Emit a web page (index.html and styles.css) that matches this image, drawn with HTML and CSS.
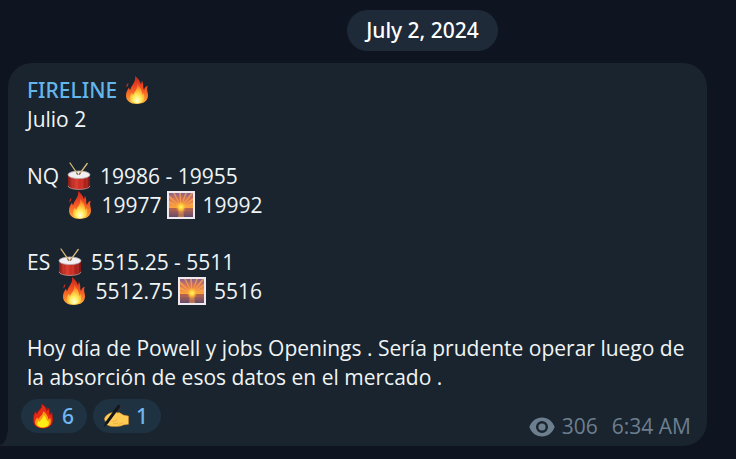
FILE: index.html
```html
<!DOCTYPE html>
<html lang="es">
<head>
<meta charset="utf-8">
<meta name="viewport" content="width=device-width, initial-scale=1">
<title>FIRELINE</title>
<link rel="stylesheet" href="styles.css">
</head>
<body>
<svg class="defs" aria-hidden="true">
  <defs>
    <linearGradient id="flame" x1="0" y1="0" x2="0" y2="1">
      <stop offset="0" stop-color="#c8241d"/><stop offset=".4" stop-color="#ef4a22"/><stop offset=".8" stop-color="#fb8a2c"/><stop offset="1" stop-color="#ffc34a"/>
    </linearGradient>
    <radialGradient id="core" cx=".5" cy=".85" r=".75">
      <stop offset="0" stop-color="#fffde0"/><stop offset=".35" stop-color="#ffee5c"/><stop offset=".75" stop-color="#ffa62e"/><stop offset="1" stop-color="#f96a25"/>
    </radialGradient>
    <linearGradient id="drumBody" x1="0" y1="0" x2="1" y2="0">
      <stop offset="0" stop-color="#8e1a18"/><stop offset=".35" stop-color="#d93a2c"/><stop offset=".65" stop-color="#c52a22"/><stop offset="1" stop-color="#7d1515"/>
    </linearGradient>
    <linearGradient id="sky" x1="0" y1="0" x2="0" y2="1">
      <stop offset="0" stop-color="#85618f"/><stop offset=".4" stop-color="#d97555"/><stop offset="1" stop-color="#ffa53a"/>
    </linearGradient>
    <linearGradient id="sea" x1="0" y1="0" x2="0" y2="1">
      <stop offset="0" stop-color="#c56b49"/><stop offset="1" stop-color="#5f4b72"/>
    </linearGradient>
    <radialGradient id="sun"><stop offset="0" stop-color="#fff873"/><stop offset=".4" stop-color="#ffd03a"/><stop offset="1" stop-color="#ff9d33" stop-opacity="0"/></radialGradient>
  </defs>
  <symbol id="fire" viewBox="0 0 28 28">
    <path fill="url(#flame)" d="M12 0c.6 3.500-.4 5.800-2.200 8.500C8.500 10.400 7.500 12 7.200 14.200c-.7-.6-1.100-1.500-1.200-2.700C4.300 14 3 16.500 3 19.500 3 25 7.500 28 13.800 28 20.500 28 25 24.800 25 19.300c0-2.200-.8-4-.9-6-.1-1.400.2-2.500.7-3.600-2.200.6-3.400 2-3.700 4.300-1-1.200-.8-3-.9-5.200-.1-1.700-.6-3-1.500-4.200.1 1.500-.1 2.700-.8 3.600C17 5 15 2 12 0z"/>
    <path fill="#d52b1f" d="M5.300 7C3.400 8.300 3 10 3.900 11.600 4.500 10.300 5.500 9 5.300 7z"/>
    <path fill="url(#core)" d="M14 8c.6 3.500-.6 6-2.800 8.700-.6.8-.9 1.500-1 2.300-.8-.5-1.100-1.300-1.100-2.200C7.500 18.500 6.700 20 6.800 22c.2 3.500 3.200 5.300 7.200 5.300 4.500 0 7.500-2.200 7.500-6 0-1.600-.5-2.900-.5-4.300-.9.5-1.400 1.200-1.600 2-.5-4.500-2-8.500-5.400-11z"/>
  </symbol>
  <symbol id="fire-bold" viewBox="0 0 24 28">
    <path fill="#e52a16" stroke="#a91310" d="M10.500 1c.7 4-1.500 5.600-3.800 8.200-.7.800-1 1.500-1.100 2.500-1-.6-1.300-1.600-1.200-2.700C2 11.800 1.500 15 1.600 18.500 1.900 24 5.700 27 11.800 27 18.500 27 22.300 23.500 22.500 18c.1-3-.9-5.200-1.200-8-1 .8-1.300 1.800-1.500 3-.8-1.300-.5-3-.8-4.700-.3-1.600-1-2.600-2.200-3.300.1 1.400 0 2.300-.6 3.100C15.500 5 13.500 2.400 10.500 1z"/>
    <path fill="#ff9b13" d="M12 9c.3 3-1.500 4.400-3.500 6.300-.8.8-1.200 1.500-1.400 2.200-.7-.3-1-1-.9-1.800-2 1.500-2.900 3.300-2.700 5.500.4 3.500 3.800 5.500 8.300 5.500 5 0 8.400-2.300 8.600-6.200.1-1.900-.3-3-.5-4.300-.9.4-1.400 1-1.700 1.800C17.200 14.300 15.500 11 12 9z"/>
    <path fill="#ffed16" d="M12.500 13c0 2.600-1.300 4-3 5.500-.6.6-.9 1.100-1 1.700-.7-.2-1-.6-1-1.200-1.300 1-1.900 2.100-1.600 3.600.5 2.400 2.900 3.600 6.100 3.600 3.500 0 6-1.500 6.200-4.400.1-1.200-.2-2.100-.5-3-.7.2-1.100.6-1.300 1.200-.5-2.900-1.600-5.400-3.900-7z"/>
  </symbol>
  <symbol id="drum" viewBox="0 0 28 28">
    <path fill="url(#drumBody)" d="M3 13v10.500C3 29 25 29 25 23.500V13z"/>
    <path fill="none" stroke="#e0604f" stroke-width=".4" d="M7 16v9M12 17v9M17 17v9M22 16v9"/>
    <path fill="none" stroke="#c9a8a8" stroke-width=".7" d="M3 23.800c0 4.800 22 4.800 22 0"/>
    <ellipse cx="14" cy="12.800" rx="11" ry="3.800" fill="#f1eff1" stroke="#b9aeb3" stroke-width=".8"/>
    <path stroke="#d9b878" stroke-width="1.300" stroke-linecap="round" d="M5 1l7.600 11M22.200 1.500L14.500 12"/>
    <path stroke="#8c7555" stroke-width="1.300" stroke-linecap="round" d="M11.700 11l1 1.300M15.300 11l-1 1.300"/>
  </symbol>
  <symbol id="sunrise" viewBox="0 0 28 28">
    <path fill="#f0e9ed" d="M0 0h28v28H0z"/>
    <path fill="url(#sky)" d="M2 2h24v15H2z"/>
    <path fill="#ffad4f" opacity=".65" d="M14 16L2 4v3zM14 16L6 2h2zM14 16L12 2h2zM14 16L18 2h2zM14 16L24 2h2v1zM14 16L26 7v2zM14 16L2 10v2zM14 16l12-4v2z"/>
    <path fill="url(#sea)" d="M2 17h24v9H2z"/>
    <path fill="#f09a43" opacity=".6" d="M12 17h4l1 9h-6z"/>
    <circle cx="14" cy="16" r="6" fill="url(#sun)"/>
    <path stroke="#954f51" stroke-width=".6" opacity=".7" d="M2 18h9M17 18h9M2 21h8M18 21h8M3 24h22"/>
  </symbol>
  <symbol id="writing" viewBox="0 0 28 26">
    <path fill="#ffcb52" stroke="#dc8c25" stroke-width=".5" d="M1.500 16C2.500 13 5 11 8 9.800c3-.9 7-1 10-.3l4 2.500 5.500 1V22l-5.500.6c-3 1.700-9 2-14 1.400-3-.5-5-2.500-5.500-4.500z"/>
    <path fill="none" stroke="#e3a03a" stroke-width=".7" d="M10 19c2.500-.3 4-.8 5.500-2M11 21.500c2 0 4-.5 5.500-1.500M17 22c2-.2 3.500-1 4.500-2"/>
    <path stroke="#14171a" stroke-width="3.200" stroke-linecap="round" d="M17 2.500L4.500 19.500"/>
    <path fill="#14171a" d="M3 18l3 2.200L.8 25z"/>
    <path fill="none" stroke="#30363a" stroke-width=".8" d="M18.500 2l.4 3-3.400 5"/>
  </symbol>
</svg>

<main class="chat">
  <time class="date" datetime="2024-07-02">July 2, 2024</time>

  <article class="message">
    <div class="text">
      <div>
        <h1 class="author">FIRELINE <svg class="emoji" role="img" aria-label="🔥"><use href="#fire"/></svg></h1>
        <p>Julio 2</p>
      </div>
      <div>
        <p>NQ <svg class="emoji" role="img" aria-label="🥁"><use href="#drum"/></svg> 19986 - 19955</p>
        <p class="indent-wide"><svg class="emoji" role="img" aria-label="🔥"><use href="#fire"/></svg> 19977 <svg class="emoji" role="img" aria-label="🌅"><use href="#sunrise"/></svg> 19992</p>
      </div>
      <div>
        <p>ES <svg class="emoji" role="img" aria-label="🥁"><use href="#drum"/></svg> 5515.25 - 5511</p>
        <p class="indent"><svg class="emoji" role="img" aria-label="🔥"><use href="#fire"/></svg> 5512.75 <svg class="emoji" role="img" aria-label="🌅"><use href="#sunrise"/></svg> 5516</p>
      </div>
      <p>Hoy día de Powell y jobs Openings . Sería prudente operar luego de la absorción de esos datos en el mercado .</p>
    </div>

    <footer class="footer">
      <div class="reactions">
        <button class="reaction" type="button"><svg class="reaction-fire" role="img" aria-label="🔥"><use href="#fire-bold"/></svg>6</button>
        <button class="reaction" type="button"><svg class="reaction-hand" role="img" aria-label="✍️"><use href="#writing"/></svg>1</button>
      </div>
      <div class="meta">
        <svg class="eye" viewBox="0 0 26 20" aria-hidden="true"><path fill="currentColor" fill-rule="evenodd" d="M13 .5C7 .5 2.500 4.200.3 10 2.500 15.800 7 19.500 13 19.500S23.500 15.800 25.700 10C23.500 4.200 19 .5 13 .5zM13 4a6 6 0 1 1 0 12 6 6 0 0 1 0-12z"/><circle cx="13" cy="10" r="3.600" fill="currentColor"/></svg>
        <span>306</span>
        <time datetime="06:34">6:34 AM</time>
      </div>
    </footer>
  </article>
</main>
</body>
</html>
```
FILE: styles.css
```css
* {
  box-sizing: border-box;
}

body {
  margin: 0;
  min-height: 100vh;
  background: #0e1420;
  color: #f0f4f6;
  font-family: "Open Sans", "Noto Sans", sans-serif;
  font-size: 21px;
  line-height: 29px;
}

h1,
p {
  margin: 0;
}

.defs {
  position: absolute;
  width: 0;
  height: 0;
}

.chat {
  display: flex;
  flex-direction: column;
  align-items: center;
  gap: 12px;
  padding: 10px 29px 14px 8px;
}

.date {
  margin-left: 130px;
  padding: 6px 19px;
  border-radius: 21px;
  background: #1e2a38;
  color: #fff;
  font-family: "Noto Sans", "Open Sans", sans-serif;
  font-size: 21px;
  font-weight: 500;
}

.message {
  position: relative;
  align-self: stretch;
  padding: 13px 16px 13px 19px;
  border-radius: 24px 24px 24px 0;
  background: #19242e;
}

.message::before {
  content: "";
  position: absolute;
  right: 100%;
  bottom: 0;
  width: 8px;
  height: 18px;
  background: radial-gradient(ellipse 8px 17px at 0 0, transparent 96%, #19242e 100%);
}

.text {
  display: flex;
  flex-direction: column;
  gap: 28px;
}

.author {
  color: #64b5ea;
  font-family: "Noto Sans", "Open Sans", sans-serif;
  font-size: 21px;
  font-weight: 500;
}

.emoji {
  width: 28px;
  height: 28px;
  margin: -4px 2px -4px 0;
  vertical-align: -2px;
}

.indent-wide {
  padding-left: 39px;
}

.indent {
  padding-left: 33px;
}

.footer {
  display: flex;
  justify-content: space-between;
  align-items: flex-end;
  margin: 7px 0 0 -6px;
}

.reactions {
  display: flex;
  gap: 6px;
}

.reaction {
  display: flex;
  align-items: center;
  gap: 7px;
  height: 34px;
  padding: 0 13px 0 10px;
  border: 0;
  border-radius: 17px;
  background: #1f3241;
  color: #70b6f2;
  font: 500 21px/29px "Noto Sans", "Open Sans", sans-serif;
}

.reaction-fire {
  width: 24px;
  height: 26px;
}

.reaction-hand {
  width: 26px;
  height: 26px;
}

.meta {
  display: flex;
  align-items: center;
  gap: 7px;
  margin-bottom: -8px;
  color: #6d7f8f;
}

.meta time {
  margin-left: 7px;
}

.eye {
  width: 26px;
  height: 20px;
}
```
